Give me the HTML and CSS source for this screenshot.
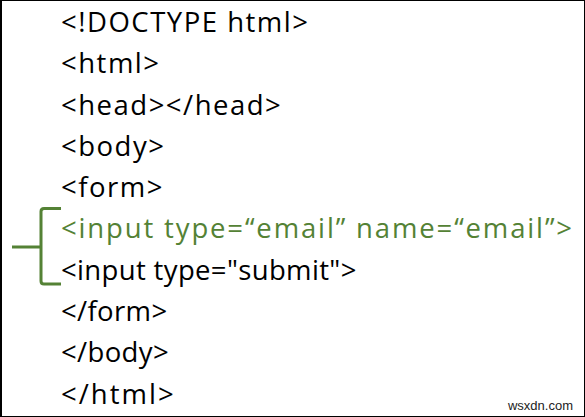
FILE: index.html
```html
<!DOCTYPE html>
<html>
<head>
<meta charset="utf-8">
<link rel="stylesheet" href="styles.css">
</head>
<body>
<div class="frame">
  <div class="code">
    <div class="line">&lt;!DOCTYPE html&gt;</div>
    <div class="line">&lt;html&gt;</div>
    <div class="line">&lt;head&gt;&lt;/head&gt;</div>
    <div class="line">&lt;body&gt;</div>
    <div class="line">&lt;form&gt;</div>
    <div class="group">
      <svg class="bracket" width="51" height="82" viewBox="0 0 51 82">
        <path d="M53 1.5 H34 Q31 1.5 31 4.5 V74 Q31 77 34 77 H53 M2 40 H31" fill="none" stroke="#548235" stroke-width="3"/>
      </svg>
      <div class="lines">
        <div class="line green">&lt;input type=“email” name=“email”&gt;</div>
        <div class="line tight">&lt;input type="submit"&gt;</div>
      </div>
    </div>
    <div class="line tight">&lt;/form&gt;</div>
    <div class="line tight">&lt;/body&gt;</div>
    <div class="line wide">&lt;/html&gt;</div>
  </div>
  <div class="mark">wsxdn.com</div>
</div>
</body>
</html>
```
FILE: styles.css
```css
html, body {
  margin: 0;
  padding: 0;
  background: #fff;
}
.frame {
  position: relative;
  box-sizing: border-box;
  width: 585px;
  height: 417px;
  border: 1px solid #000;
  border-left-width: 2px;
  background: #fff;
  overflow: hidden;
}
.code {
  padding: 0 0 0 59px;
  font-family: "Open Sans", sans-serif;
  font-size: 27.5px;
  letter-spacing: 1.5px;
  color: #000;
}
.line {
  height: 41.3px;
  line-height: 41.3px;
  white-space: nowrap;
}
.green {
  color: #548235;
  letter-spacing: 1.85px;
}
.tight {
  letter-spacing: 0.35px;
}
.wide {
  letter-spacing: 2px;
}
.group {
  display: flex;
  margin-left: -51px;
}
.bracket {
  flex: none;
  display: block;
}
.mark {
  position: absolute;
  right: 11px;
  bottom: 3px;
  font-family: "Liberation Sans", Arial, sans-serif;
  font-size: 13px;
  letter-spacing: 0;
  color: #222;
}
```
